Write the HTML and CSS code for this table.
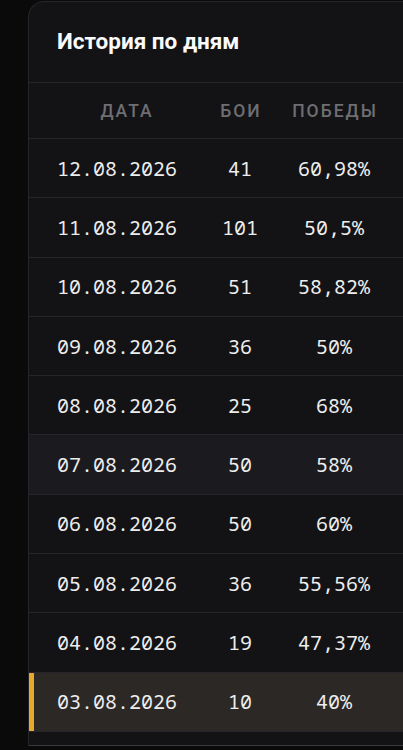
FILE: index.html
```html
<!DOCTYPE html>
<html lang="ru">
<head>
<meta charset="utf-8">
<link rel="stylesheet" href="styles.css">
</head>
<body>
<div class="card">
  <div class="title">История по дням</div>
  <div class="row head">
    <div class="c-date">Дата</div>
    <div class="c-num">Бои</div>
    <div class="c-win">Победы</div>
  </div>
  <div class="row"><div class="c-date">12.08.2026</div><div class="c-num">41</div><div class="c-win">60,98%</div></div>
  <div class="row"><div class="c-date">11.08.2026</div><div class="c-num">101</div><div class="c-win">50,5%</div></div>
  <div class="row"><div class="c-date">10.08.2026</div><div class="c-num">51</div><div class="c-win">58,82%</div></div>
  <div class="row"><div class="c-date">09.08.2026</div><div class="c-num">36</div><div class="c-win">50%</div></div>
  <div class="row"><div class="c-date">08.08.2026</div><div class="c-num">25</div><div class="c-win">68%</div></div>
  <div class="row hover"><div class="c-date">07.08.2026</div><div class="c-num">50</div><div class="c-win">58%</div></div>
  <div class="row"><div class="c-date">06.08.2026</div><div class="c-num">50</div><div class="c-win">60%</div></div>
  <div class="row"><div class="c-date">05.08.2026</div><div class="c-num">36</div><div class="c-win">55,56%</div></div>
  <div class="row"><div class="c-date">04.08.2026</div><div class="c-num">19</div><div class="c-win">47,37%</div></div>
  <div class="row active"><div class="c-date">03.08.2026</div><div class="c-num">10</div><div class="c-win">40%</div></div>
  <div class="tail"></div>
</div>
</body>
</html>
```
FILE: styles.css
```css
html, body {
  margin: 0;
  padding: 0;
  background: #0a0a0a;
  overflow: hidden;
  height: 750px;
}
.card {
  margin: 1px 0 0 28px;
  width: 375px;
  overflow: hidden;
  background: #131315;
  border-left: 1px solid #26262a;
  border-top: 1px solid #26262a;
  border-top-left-radius: 16px;
  color: #ececec;
}
.title {
  height: 78px;
  padding-bottom: 2px;
  display: flex;
  align-items: center;
  padding-left: 28px;
  font-family: Roboto, "Noto Sans", sans-serif;
  font-weight: 700;
  font-size: 22.5px;
  color: #fafafa;
  border-bottom: 1px solid #26262a;
}
.row {
  display: grid;
  grid-template-columns: 166px 90px 98px;
  align-items: center;
  height: 58.3px;
  border-bottom: 1px solid #26262a;
  font-family: "Noto Sans Mono", "DejaVu Sans Mono", monospace;
  font-size: 20px;
  color: #ededed;
}
.row.head {
  height: 55px;
  font-family: Roboto, "Noto Sans", sans-serif;
  font-weight: 500;
  font-size: 17.5px;
  letter-spacing: 2px;
  text-transform: uppercase;
  color: #6e6e73;
}
.c-date { padding-left: 28px; }
.head .c-date { text-align: center; padding-left: 30px; }
.head .c-num, .head .c-win { padding-left: 2px; }
.c-num, .c-win { text-align: center; }
.row.hover { background: #1b1b1f; }
.row.active {
  background: #2b2825;
  box-shadow: inset 5px 0 0 #e8a82a;
}
.tail {
  height: 13px;
  border-bottom: 1px solid #3a3a3e;
}
```
